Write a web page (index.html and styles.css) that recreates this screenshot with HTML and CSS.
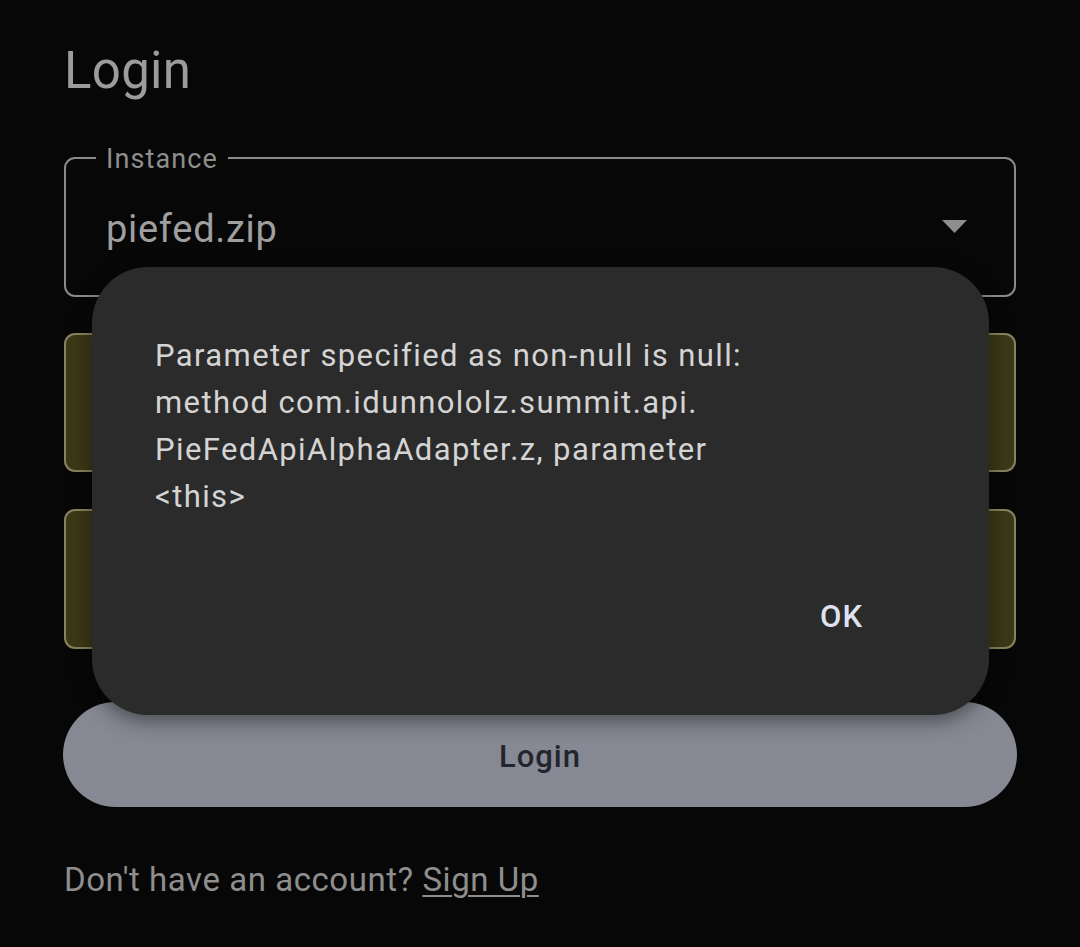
FILE: index.html
```html
<!DOCTYPE html>
<html lang="en">
<head>
<meta charset="utf-8">
<title>Login</title>
<link rel="stylesheet" href="styles.css">
</head>
<body>
<main class="page">
  <h1 class="title">Login</h1>
  <div class="field field-outline">
    <span class="field-label">Instance</span>
    <span class="field-value">piefed.zip</span>
    <svg class="dropdown" width="25" height="13" viewBox="0 0 25 13"><polygon points="0,0 25,0 12.5,13" fill="#8e8e8e"/></svg>
  </div>
  <div class="field field-filled"></div>
  <div class="field field-filled second"></div>
  <button class="login-btn">Login</button>
  <p class="signup">Don't have an account? <a class="signup-link">Sign Up</a></p>
</main>
<div class="dialog" role="alertdialog">
  <p class="dialog-text">Parameter specified as non-null is null:<br>method com.idunnololz.summit.api.<br>PieFedApiAlphaAdapter.z, parameter<br>&lt;this&gt;</p>
  <div class="dialog-actions">
    <button class="dialog-ok">OK</button>
  </div>
</div>
</body>
</html>
```
FILE: styles.css
```css
html, body {
  margin: 0;
  padding: 0;
  background: #070707;
  font-family: Roboto, "Noto Sans", sans-serif;
}
body {
  width: 1080px;
  height: 947px;
  overflow: hidden;
  position: relative;
}
.page {
  padding: 41px 64px 0 64px;
  display: flex;
  flex-direction: column;
}
.title {
  margin: 0;
  font-size: 51px;
  line-height: 60px;
  font-weight: 400;
  letter-spacing: 0.3px;
  color: #9c9c9c;
}
.field {
  box-sizing: border-box;
  width: 952px;
  border-radius: 11px;
  position: relative;
}
.field-outline {
  margin-top: 56px;
  height: 140px;
  border: 2px solid #8a8a8a;
  display: flex;
  align-items: center;
  padding: 4px 47px 0 40px;
}
.field-label {
  position: absolute;
  left: 30px;
  top: -18px;
  padding: 0 10px;
  background: #070707;
  color: #8e8e8e;
  font-size: 27px;
  line-height: 36px;
  letter-spacing: 1.1px;
}
.field-value {
  flex: 1;
  color: #9f9f9f;
  font-size: 38px;
  line-height: 38px;
  letter-spacing: 0.7px;
}
.dropdown {
  display: block;
  margin-top: -6px;
}
.field-filled {
  margin-top: 36px;
  height: 139px;
  background: #3b3817;
  border: 2px solid #86835e;
}
.field-filled.second {
  margin-top: 37px;
  height: 140px;
}
.login-btn {
  margin-top: 53px;
  height: 105px;
  width: 954px;
  margin-left: -1px;
  border: none;
  border-radius: 53px;
  background: #868993;
  color: #22252e;
  font-family: Roboto, sans-serif;
  font-size: 31px;
  font-weight: 500;
  letter-spacing: 1px;
  padding: 4px 0 0 0;
}
.signup {
  margin: 53px 0 0 0;
  font-size: 33px;
  line-height: 40px;
  letter-spacing: 0.55px;
  color: #8e8e8e;
}
.signup-link {
  color: #8e8e8e;
  text-decoration: underline;
  text-decoration-thickness: 2px;
  text-underline-offset: 4px;
}
.dialog {
  position: absolute;
  left: 92px;
  top: 267px;
  width: 897px;
  height: 448px;
  box-sizing: border-box;
  background: #2b2b2b;
  border-radius: 56px;
  padding: 65px 63px 0 63px;
  box-shadow: 0 6px 20px rgba(0, 0, 0, 0.45);
  display: flex;
  flex-direction: column;
}
.dialog-text {
  margin: 0;
  font-size: 31px;
  line-height: 47px;
  letter-spacing: 1.4px;
  color: #d4d4d4;
  white-space: nowrap;
}
.dialog-actions {
  margin-top: 73px;
  display: flex;
  justify-content: flex-end;
  padding-right: 63px;
}
.dialog-ok {
  background: none;
  border: none;
  padding: 0;
  font-family: Roboto, sans-serif;
  font-size: 31px;
  line-height: 47px;
  font-weight: 500;
  letter-spacing: 1px;
  color: #dfe2f1;
}
```
